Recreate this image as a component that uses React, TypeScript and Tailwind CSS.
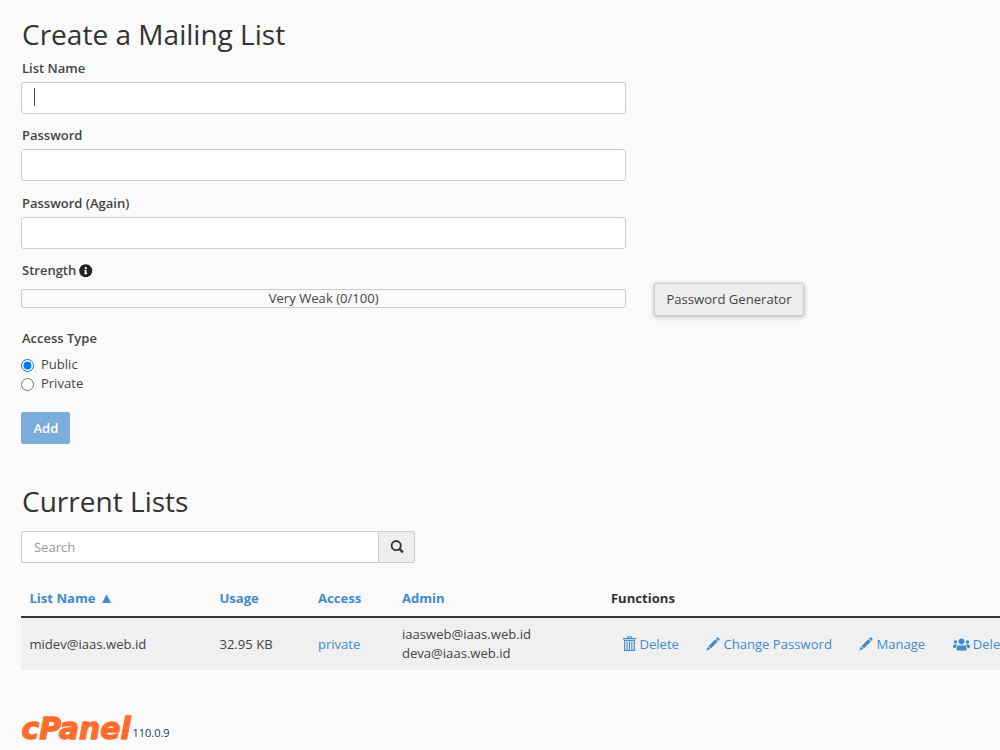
import { useState } from 'react'
import type { ReactNode } from 'react'
import { FaInfoCircle, FaUsers } from 'react-icons/fa'

interface MailingList {
  name: string
  usage: string
  access: string
  admins: string[]
}

const LISTS: MailingList[] = [
  { name: 'midev@iaas.web.id', usage: '32.95 KB', access: 'private', admins: ['iaasweb@iaas.web.id', 'deva@iaas.web.id'] },
]

const inputClass = 'block h-8 w-full rounded-[3px] border border-[#ccc] bg-white px-[11px] outline-none'

export default function App() {
  const [access, setAccess] = useState('public')

  return (
    <div className="h-[750px] w-[1000px] overflow-hidden bg-[#fafafa] pl-[21.4px] pt-[15px] font-['Open_Sans',sans-serif] text-[13.1px] leading-[19px] text-[#444]">
      <h2 className="h-[43.5px] pl-[0.6px] text-[28.05px] leading-[38px] text-[#333]">Create a Mailing List</h2>

      <form className="w-[604.6px]">
        <Field label="List Name">
          <div className={`${inputClass} flex items-center`}>
            <span className="-mt-px ml-px h-[18px] w-px bg-[#555]" />
          </div>
        </Field>
        <Field label="Password">
          <input type="password" className={inputClass} />
        </Field>
        <Field label="Password (Again)">
          <input type="password" className={inputClass} />
        </Field>

        <div className="h-[67.5px]">
          <div className="flex items-center gap-[3px] pl-[0.6px] text-[13px] font-semibold">
            Strength <FaInfoCircle size={13.5} className="text-[#222]" />
          </div>
          <div className="flex items-start">
            <div className="mt-[8.5px] h-[19px] w-[604.6px] shrink-0 rounded-[2px] border border-[#ccc] text-center leading-[17px]">
              Very Weak (0/100)
            </div>
            <button
              type="button"
              className="ml-[28px] mt-[3px] h-[33px] w-[150px] shrink-0 rounded-[2px] border border-[#ccc] bg-[#eee] shadow-[0_1px_5px_rgba(0,0,0,0.28)]"
            >
              Password Generator
            </button>
          </div>
        </div>

        <div className="pl-[0.6px] text-[13px] font-semibold">Access Type</div>
        <div className="mt-[7px]">
          {([
            ['public', 'Public'],
            ['private', 'Private'],
          ] as const).map(([key, label]) => (
            <label key={key} className="flex h-[19px] items-center">
              <input
                type="radio"
                name="access"
                checked={access === key}
                onChange={() => setAccess(key)}
                className="mr-[6.5px] mt-[3px] size-[13px]"
              />
              {label}
            </label>
          ))}
        </div>
        <button type="button" className="mt-[19px] block h-8 w-[49px] rounded-[2px] bg-[#7aaddc] pt-px font-semibold text-white">
          Add
        </button>
      </form>

      <h2 className="mt-[38.5px] pl-[0.6px] text-[28.05px] leading-[38px] text-[#333]">Current Lists</h2>
      <div className="mt-[10.5px] flex w-[393.6px]">
        <input
          placeholder="Search"
          className="h-8 min-w-0 flex-1 rounded-l-[3px] border border-r-0 border-[#ccc] bg-white px-[11.5px] outline-none placeholder:text-[#999]"
        />
        <button type="button" className="flex h-8 w-[37px] items-center justify-center rounded-r-[2px] border border-[#ccc] bg-[#eee] pl-px">
          <SearchIcon />
        </button>
      </div>

      <table className="mt-[17px] w-[1110px] table-fixed border-collapse text-left">
        <colgroup>
          <col className="w-[190px]" />
          <col className="w-[98.5px]" />
          <col className="w-[84px]" />
          <col className="w-[209px]" />
          <col />
        </colgroup>
        <thead>
          <tr className="h-[37px] border-b-2 border-[#333] text-[#428bca]">
            <th className="pl-[8px] pt-[2px] font-bold">
              List Name <span className="text-[15px] leading-none">▲</span>
            </th>
            <th className="pl-[8px] pt-[2px] font-bold">Usage</th>
            <th className="pl-[8px] pt-[2px] font-bold">Access</th>
            <th className="pl-[8px] pt-[2px] font-bold">Admin</th>
            <th className="pl-[8px] pt-[2px] font-bold text-[#333]">Functions</th>
          </tr>
        </thead>
        <tbody>
          {LISTS.map((l) => (
            <tr key={l.name} className="h-[53px] bg-[#f0f0f0]">
              <td className="pl-[8px] pt-px">{l.name}</td>
              <td className="pl-[8px] pt-px">{l.usage}</td>
              <td className="pl-[8px] pt-px text-[#428bca]">{l.access}</td>
              <td className="pl-[8px]">
                {l.admins.map((a) => <div key={a}>{a}</div>)}
              </td>
              <td className="pl-[20.5px] pt-px">
                <div className="flex gap-[27.5px] whitespace-nowrap text-[#428bca]">
                  <Action icon={<TrashIcon />} label="Delete" />
                  <Action icon={<PencilIcon />} label="Change Password" />
                  <Action icon={<PencilIcon />} label="Manage" />
                  <Action icon={<FaUsers size={17} />} label="Delegate" />
                </div>
              </td>
            </tr>
          ))}
        </tbody>
      </table>

      <footer className="mt-[44px] flex items-start">
        <Logo />
        <span className="mt-[9px] text-[11px] text-[#293a4a]">110.0.9</span>
      </footer>
    </div>
  )
}

function Field({ label, children }: { label: string; children: ReactNode }) {
  return (
    <div className="h-[67.5px]">
      <div className="mb-[4px] pl-[0.6px] text-[13px] font-semibold">{label}</div>
      {children}
    </div>
  )
}

function Action({ icon, label }: { icon: ReactNode; label: string }) {
  return (
    <a className="flex items-center gap-[3px]">
      {icon}
      {label}
    </a>
  )
}

function SearchIcon() {
  return (
    <svg width="14" height="14" viewBox="0 0 14 14" fill="none" stroke="#333" strokeWidth="1.8">
      <circle cx="6.2" cy="5.6" r="4.6" />
      <path d="M9.5 8.9 13 12.4" strokeWidth="2.2" />
    </svg>
  )
}

function TrashIcon() {
  return (
    <svg width="13" height="15" viewBox="0 0 13 15" fill="none" stroke="currentColor" className="-mt-[2px]">
      <path d="M4.5 2V.8h4V2" />
      <path d="M.5 3.5V2.6h12v.9" strokeWidth="1.4" />
      <path d="M1.7 4.5v9.8h9.6V4.5z" strokeWidth="1.2" />
      <path d="M4.2 5.5v8M6.5 5.5v8M8.8 5.5v8" strokeWidth="1.1" />
    </svg>
  )
}

function PencilIcon() {
  return (
    <svg width="14" height="14" viewBox="0 0 14 14" fill="currentColor" className="-mt-px">
      <path d="M11 .6a.9.9 0 0 1 1.2 0l1.2 1.2a.9.9 0 0 1 0 1.2l-1 1-2.4-2.4z" />
      <path d="M9.4 2.2 11.8 4.6 4.8 11.6 2.4 9.2z" />
      <path d="M1.9 9.8 4.2 12.1.3 13.7z" />
    </svg>
  )
}

function Logo() {
  return (
    <svg width="111" height="30" viewBox="0 0 111 30" className="overflow-visible">
      <text
        x="0.6"
        y="25"
        textLength="109"
        lengthAdjust="spacingAndGlyphs"
        fill="#ff6c2c"
        stroke="#ff6c2c"
        strokeWidth="1.3"
        strokeLinejoin="round"
        className="font-['DejaVu_Sans',sans-serif] text-[30px] font-bold italic"
      >
        cPanel
      </text>
    </svg>
  )
}
